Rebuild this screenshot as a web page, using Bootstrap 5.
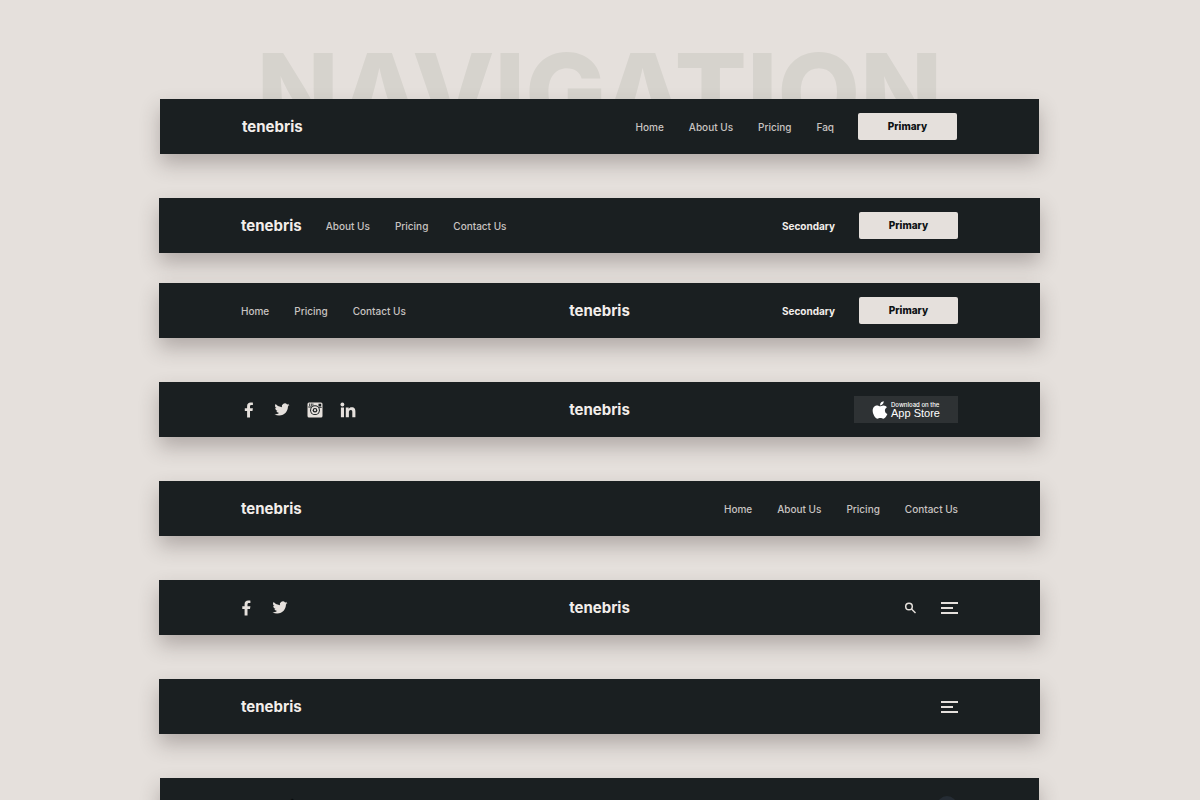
<!DOCTYPE html>
<html lang="en">
<head>
<meta charset="utf-8">
<meta name="viewport" content="width=device-width, initial-scale=1">
<title>Navigation</title>
<link href="https://cdn.jsdelivr.net/npm/bootstrap@5.3.0/dist/css/bootstrap.min.css" rel="stylesheet">
<style>
  body { background: #e5e0dc; font-family: Inter, "Liberation Sans", sans-serif; color: #e5e0dc; }
  .showcase { padding: 36px 160px 0 159px; }
  .backdrop-title { font-size: 107px; line-height: 112px; height: 63px; font-weight: 800; color: #d6d3cd; }
  .bar-stack { display: grid; gap: 44px; position: relative; }
  .site-bar { background: #1a1f21; min-height: 55px; padding: 0 82px; box-shadow: 0 10px 20px rgba(60, 45, 45, .3); }
  .bar-narrow { margin: 0 1px; }
  .bar-pair { display: grid; gap: 30px; }
  .three-part { display: grid; grid-template-columns: 1fr auto 1fr; align-items: center; }
  .wordmark { font-size: 15px; line-height: 20px; font-weight: 700; color: #f3eeeb; text-decoration: none; }
  .wordmark-dark { color: #0b0e0f; }
  .menu-links { gap: 25px; font-size: 10px; line-height: 14px; font-weight: 500; }
  .menu-links a { color: #c9c4c1; text-decoration: none; }
  .btn-main, .btn-text { font-size: 10px; line-height: 15px; font-weight: 700; border: 0; }
  .btn-main, .btn-main:hover { background: #e5e0dc; color: #0d1214; width: 99px; height: 27px; padding: 0; border-radius: 2px; font-weight: 800; }
  .btn-text, .btn-text:hover { color: #f3eeeb; padding: 1px 0 0; }
  .glyph { display: block; fill: #e5e0dc; }
  .glyph-link { display: block; line-height: 1; }
  .socials { gap: 17px; }
  .socials-compact { gap: 20px; }
  .store-btn { background: #2e3234; color: #fff; border: 0; width: 104px; height: 27px; gap: 3px; }
  .store-btn small { display: block; font-size: 6px; line-height: 6px; font-weight: 500; }
  .store-btn strong { display: block; font-family: "Liberation Sans", sans-serif; font-size: 11px; line-height: 10px; font-weight: 400; }
  .icon-btn { background: none; border: 0; padding: 0; }
  .avatar { width: 20px; height: 20px; border-radius: 50%; background: #252c34; }
</style>
</head>
<body>
<svg class="d-none" xmlns="http://www.w3.org/2000/svg">
  <symbol id="facebook" viewBox="0 0 9 16"><path d="M2.600 15.500V8.900H.3V6.200h2.300V4.300C2.600 1.900 4 .6 6.200.6c1 0 1.900.1 2.200.1v2.400H7c-1.200 0-1.500.6-1.500 1.500v1.600h2.900L8 8.900H5.500v6.600z"/></symbol>
  <symbol id="twitter" viewBox="0 0 24 24"><path d="M24 4.600a10 10 0 0 1-2.800.8 5 5 0 0 0 2.100-2.700 10 10 0 0 1-3.100 1.200 4.900 4.900 0 0 0-8.400 4.500A14 14 0 0 1 1.700 3.100a4.900 4.900 0 0 0 1.500 6.600 5 5 0 0 1-2.200-.6v.1a4.900 4.900 0 0 0 3.900 4.800 5 5 0 0 1-2.200.1 4.900 4.900 0 0 0 4.600 3.400A9.900 9.900 0 0 1 0 19.500a14 14 0 0 0 7.500 2.200c9.100 0 14-7.500 14-14v-.6A10 10 0 0 0 24 4.600z"/></symbol>
  <symbol id="instagram" viewBox="0 0 16 16"><rect x=".5" y=".5" width="15" height="15" rx="1.500"/><path fill="#1a1f21" d="M11.500 1.800h2.700v2.600h-2.700zM2.300 1.600h.8v2.300h-.8zM3.900 1.600h.8v2.300h-.8zM5.500 1.600h.8v2.100h-.8zM1.300 4.600h3.500v1H1.300zM11.200 5h3.500v.8h-3.500z"/><circle cx="8" cy="8.200" r="4.900" fill="#1a1f21"/><circle cx="8" cy="8.200" r="3.900"/><circle cx="8" cy="8.200" r="2.300" fill="#1a1f21"/><circle cx="8" cy="8.200" r="1.100"/></symbol>
  <symbol id="linkedin" viewBox="0 0 16 16"><circle cx="2.400" cy="2.500" r="1.900"/><path d="M.9 5.600h3.100v9.700H.9zM5.800 5.600h2.900v1.300c.5-.9 1.500-1.600 3-1.600 3 0 3.700 2 3.700 4.500v5.500h-3.100v-4.900c0-1.200 0-2.500-1.500-2.500s-1.900 1.100-1.900 2.400v5H5.800z"/></symbol>
  <symbol id="apple" viewBox="0 0 384 512"><path d="M318.700 268.700c-.2-36.700 16.400-64.400 50-84.800-18.800-26.900-47.200-41.700-84.700-44.600-35.500-2.800-74.300 20.700-88.500 20.700-15 0-49.400-19.700-76.400-19.700C63.300 141.200 4 184.800 4 273.500q0 39.300 14.400 81.200c12.800 36.700 59 126.700 107.200 125.200 25.200-.6 43-17.900 75.800-17.900 31.800 0 48.300 17.900 76.400 17.900 48.600-.7 90.400-82.500 102.600-119.300-65.200-30.700-61.700-90-61.700-91.900zm-56.600-164.200c27.300-32.400 24.800-61.900 24-72.500-24.100 1.400-52 16.400-67.900 34.900-17.500 19.800-27.800 44.300-25.600 71.900 26.100 2 49.900-11.400 69.500-34.300z"/></symbol>
  <symbol id="search" viewBox="0 0 12 12"><g fill="none" stroke="#e5e0dc" stroke-width="1.500"><circle cx="5" cy="4.500" r="3.300"/><path d="M7.500 7l4 4"/></g></symbol>
  <symbol id="menu" viewBox="0 0 18 12"><path d="M1 0h17v2H1zM1 5h12v2H1zM1 10h17v2H1z"/></symbol>
</svg>

<main class="showcase vh-100 overflow-hidden">
  <h1 class="backdrop-title text-center mb-0 overflow-hidden">NAVIGATION</h1>
  <div class="bar-stack">

    <nav class="site-bar bar-narrow d-flex align-items-center justify-content-between" aria-label="Links and button">
      <a class="wordmark" href="#">tenebris</a>
      <div class="d-flex align-items-center gap-4">
        <div class="menu-links d-flex"><a href="#">Home</a><a href="#">About Us</a><a href="#">Pricing</a><a href="#">Faq</a></div>
        <button type="button" class="btn btn-main">Primary</button>
      </div>
    </nav>

    <div class="bar-pair">
      <nav class="site-bar d-flex align-items-center justify-content-between" aria-label="Left links">
        <div class="d-flex align-items-center gap-4">
          <a class="wordmark" href="#">tenebris</a>
          <div class="menu-links d-flex"><a href="#">About Us</a><a href="#">Pricing</a><a href="#">Contact Us</a></div>
        </div>
        <div class="d-flex align-items-center gap-4">
          <button type="button" class="btn btn-text">Secondary</button>
          <button type="button" class="btn btn-main">Primary</button>
        </div>
      </nav>
      <nav class="site-bar three-part" aria-label="Centered logo">
        <div class="menu-links d-flex"><a href="#">Home</a><a href="#">Pricing</a><a href="#">Contact Us</a></div>
        <a class="wordmark" href="#">tenebris</a>
        <div class="d-flex align-items-center justify-content-end gap-4">
          <button type="button" class="btn btn-text">Secondary</button>
          <button type="button" class="btn btn-main">Primary</button>
        </div>
      </nav>
    </div>

    <nav class="site-bar three-part" aria-label="Social links">
      <div class="d-flex align-items-center socials">
        <a class="glyph-link" href="#" aria-label="Facebook"><svg class="glyph" width="16" height="16"><use href="#facebook"/></svg></a>
        <a class="glyph-link" href="#" aria-label="Twitter"><svg class="glyph" width="16" height="15"><use href="#twitter"/></svg></a>
        <a class="glyph-link" href="#" aria-label="Instagram"><svg class="glyph" width="16" height="16"><use href="#instagram"/></svg></a>
        <a class="glyph-link" href="#" aria-label="LinkedIn"><svg class="glyph" width="16" height="16"><use href="#linkedin"/></svg></a>
      </div>
      <a class="wordmark" href="#">tenebris</a>
      <button type="button" class="store-btn d-flex align-items-center justify-content-center ms-auto p-0">
        <svg width="16" height="20" fill="#fff"><use href="#apple"/></svg>
        <span class="text-start"><small>Download on the</small><strong>App Store</strong></span>
      </button>
    </nav>

    <nav class="site-bar d-flex align-items-center justify-content-between" aria-label="Right links">
      <a class="wordmark" href="#">tenebris</a>
      <div class="menu-links d-flex"><a href="#">Home</a><a href="#">About Us</a><a href="#">Pricing</a><a href="#">Contact Us</a></div>
    </nav>

    <nav class="site-bar three-part" aria-label="Social and search">
      <div class="d-flex align-items-center socials-compact">
        <a class="glyph-link" href="#" aria-label="Facebook"><svg class="glyph" width="11" height="16"><use href="#facebook"/></svg></a>
        <a class="glyph-link" href="#" aria-label="Twitter"><svg class="glyph" width="16" height="15"><use href="#twitter"/></svg></a>
      </div>
      <a class="wordmark" href="#">tenebris</a>
      <div class="d-flex align-items-center justify-content-end gap-4">
        <button type="button" class="icon-btn" aria-label="Search"><svg class="glyph" width="12" height="12"><use href="#search"/></svg></button>
        <button type="button" class="icon-btn" aria-label="Menu"><svg class="glyph" width="18" height="12"><use href="#menu"/></svg></button>
      </div>
    </nav>

    <nav class="site-bar d-flex align-items-center justify-content-between" aria-label="Menu only">
      <a class="wordmark" href="#">tenebris</a>
      <button type="button" class="icon-btn" aria-label="Menu"><svg class="glyph" width="18" height="12"><use href="#menu"/></svg></button>
    </nav>

    <nav class="site-bar bar-narrow d-flex align-items-center justify-content-between" aria-label="Account">
      <a class="wordmark wordmark-dark" href="#">tenebris</a>
      <span class="avatar"></span>
    </nav>
  </div>
</main>
<script src="https://cdn.jsdelivr.net/npm/bootstrap@5.3.0/dist/js/bootstrap.bundle.min.js"></script>
</body>
</html>
